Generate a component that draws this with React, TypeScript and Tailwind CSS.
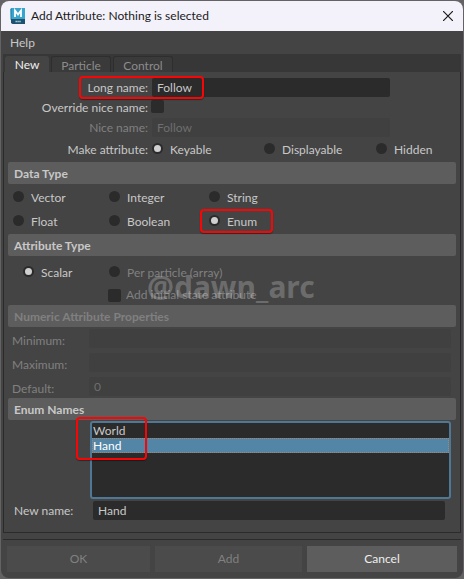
import { useState, type ReactNode } from "react";

const field =
  "block h-[19px] min-w-0 rounded-xs bg-[#2b2b2b] px-[5px] text-[12px] leading-[19px] text-[#c8c8c8] outline-none disabled:bg-[#404040] disabled:text-[#6e6e6e]";

const checkbox = "size-[13px] shrink-0 appearance-none rounded-xs bg-[#2b2b2b] checked:bg-[#c8c8c8]";

function Section({ title, disabled = false }: { title: string; disabled?: boolean }) {
  return (
    <h2
      className={`h-[22px] rounded-xs bg-[#5d5d5d] px-[6px] text-[12px] leading-[24px] font-bold ${
        disabled ? "text-[#808080]" : "text-[#c8c8c8]"
      }`}
    >
      {title}
    </h2>
  );
}

function Radio({
  group,
  label,
  checked = false,
  disabled = false,
}: {
  group: string;
  label: string;
  checked?: boolean;
  disabled?: boolean;
}) {
  return (
    <label className={`flex h-6 items-center gap-[7px] ${disabled ? "text-[#808080]" : ""}`}>
      <input
        type="radio"
        name={group}
        defaultChecked={checked}
        disabled={disabled}
        className="mb-[3px] size-[11px] shrink-0 appearance-none rounded-full border-2 border-[#2b2b2b] bg-[#2b2b2b] checked:bg-[#d0d0d0]"
      />
      <span className="whitespace-nowrap">{label}</span>
    </label>
  );
}

function NumberRow({ id, label, value = "" }: { id: string; label: string; value?: string }) {
  return (
    <div className="flex h-6 items-start pr-[5px] pl-1 text-[#808080]">
      <label htmlFor={id} className="w-[77px] pt-1">
        {label}
      </label>
      <input id={id} defaultValue={value} disabled className={`${field} flex-1`} />
    </div>
  );
}

function Highlight({ className }: { className: string }) {
  return (
    <div
      aria-hidden="true"
      className={`pointer-events-none absolute rounded-[4px] border-2 border-[#fa0505] shadow-[0_1px_1px_#00000066] ${className}`}
    />
  );
}

function Tab({ active = false, children }: { active?: boolean; children: ReactNode }) {
  return (
    <button
      type="button"
      role="tab"
      aria-selected={active}
      className={`h-4 rounded-t-[3px] leading-[18px] ${
        active
          ? "w-11 bg-[#444444] text-[#eeeeee]"
          : "w-[60px] border border-b-0 border-[#2e2e2e] bg-[#3a3a3a] text-[#8c8c8c]"
      }`}
    >
      {children}
    </button>
  );
}

function AppIcon() {
  return (
    <svg width="16" height="16" viewBox="0 0 16 16" aria-hidden="true">
      <path d="M1.5 0H15v12H1L.5 1z" fill="#39a5cc" />
      <path d="M.5 1 1.5 0v11L.5 12z" fill="#1b7fa6" />
      <path d="M1 11h14v5H2.5L1 15z" fill="#1c5470" />
      <path d="M5 9V2.5l3 4 3-4V9" fill="none" stroke="#fff" strokeWidth="1.8" />
      <path d="M5.5 13.5h1.4M7.4 13.5h1.4M9.3 13.5h1.4" stroke="#b8d0dc" strokeWidth="1.6" />
    </svg>
  );
}

export default function App() {
  const [names, setNames] = useState(["Hand"]);

  return (
    <div className="bg-[#656266] p-px font-[Lato,sans-serif] text-[12px] leading-4 text-[#c8c8c8]">
      <main className="relative overflow-hidden rounded-lg bg-[#444444]">
        <header className="flex h-[30px] items-center bg-[#f3f1f9] pr-[10px] pl-[9px] text-[#1b1b1b]">
          <AppIcon />
          <h1 className="ml-[5px] flex-1 text-[12px]">Add Attribute: Nothing is selected</h1>
          <button type="button" aria-label="Close">
            <svg width="10" height="10" viewBox="0 0 10 10" stroke="#1b1b1b" strokeWidth="1.2">
              <path d="M0 0l10 10M10 0L0 10" />
            </svg>
          </button>
        </header>

        <nav className="flex h-[23px] items-center px-[9px]">
          <button type="button">Help</button>
        </nav>

        <div className="mx-[2px]">
          <div role="tablist" className="flex h-[18px] items-end gap-[2px] bg-[#373737] px-[2px]">
            <Tab active>New</Tab>
            <Tab>Particle</Tab>
            <Tab>Control</Tab>
          </div>

          <div className="border border-t-0 border-[#2b2b2b] px-1 pt-[6px] pb-3">
            <div className="grid grid-cols-[140px_1fr] gap-x-1 pr-[66px]">
              <label htmlFor="long" className="pt-[2px] text-right">
                Long name:
              </label>
              <input id="long" defaultValue="Follow" className={field} />
            </div>
            <div className="mt-[3px] grid h-[17px] grid-cols-[140px_1fr] gap-x-[3px]">
              <label htmlFor="override" className="text-right">
                Override nice name:
              </label>
              <input id="override" type="checkbox" className={checkbox} />
            </div>
            <div className="mt-[1px] grid grid-cols-[140px_1fr] gap-x-1 pr-[66px]">
              <label htmlFor="nice" className="pt-[2px] text-right text-[#808080]">
                Nice name:
              </label>
              <input id="nice" defaultValue="Follow" disabled className={field} />
            </div>
            <div className="mt-[1px] grid h-6 grid-cols-[140px_108px_108px_1fr] gap-x-1">
              <span className="pt-1 text-right">Make attribute:</span>
              <Radio group="make" label="Keyable" checked />
              <Radio group="make" label="Displayable" />
              <Radio group="make" label="Hidden" />
            </div>

            <Section title="Data Type" />
            <div className="grid grid-cols-[96px_100px_1fr] pt-[2px] pl-[5px]">
              <Radio group="data" label="Vector" />
              <Radio group="data" label="Integer" />
              <Radio group="data" label="String" />
              <Radio group="data" label="Float" />
              <Radio group="data" label="Boolean" />
              <Radio group="data" label="Enum" checked />
            </div>

            <Section title="Attribute Type" />
            <div className="grid grid-cols-[86px_1fr] pt-[5px] pl-[15px]">
              <Radio group="type" label="Scalar" checked />
              <Radio group="type" label="Per particle (array)" disabled />
            </div>
            <label className="ml-[100px] flex h-5 items-center gap-[5px] text-[#808080]">
              <input type="checkbox" disabled className={checkbox} />
              Add initial state attribute
            </label>

            <Section title="Numeric Attribute Properties" disabled />
            <div className="-mb-[3px] pt-[2px]">
              <NumberRow id="minimum" label="Minimum:" />
              <NumberRow id="maximum" label="Maximum:" />
              <NumberRow id="default" label="Default:" value="0" />
            </div>

            <Section title="Enum Names" />
            <div className="mt-[1px] mr-[5px] ml-[82px]">
              <select
                multiple
                size={5}
                aria-label="Enum Names"
                value={names}
                onChange={(e) => setNames(Array.from(e.target.selectedOptions, (o) => o.value))}
                className="block h-[78px] w-full appearance-none overflow-hidden rounded-[3px] border-2 border-[#4f7896] bg-[#2b2b2b] p-0 text-[12px] text-[#c8c8c8] outline-none"
              >
                <option className="h-[15px] min-h-0 px-px py-0 leading-[15px]">World</option>
                <option className="h-[15px] min-h-0 px-px py-0 leading-[15px] outline-1 -outline-offset-1 outline-dotted outline-[#a88468] checked:bg-[linear-gradient(#5285a6,#5285a6)] checked:text-white">
                  Hand
                </option>
              </select>
            </div>
            <div className="mt-[2px] grid grid-cols-[79px_1fr] pr-[11px] pl-[6px]">
              <label htmlFor="newname" className="pt-[2px]">
                New name:
              </label>
              <input id="newname" defaultValue="Hand" className={field} />
            </div>
          </div>
        </div>

        <footer className="mx-[2px] mt-[6px] grid grid-cols-[143fr_147fr_150fr] gap-[5px] border-t border-[#2b2b2b] px-1 pt-[6px] pb-[6px]">
          <button type="button" disabled className="h-[26px] bg-[#4b4b4b] text-[#808080]">
            OK
          </button>
          <button type="button" disabled className="h-[26px] bg-[#4b4b4b] text-[#808080]">
            Add
          </button>
          <button type="button" className="h-[26px] bg-[#5d5d5d] text-[#eeeeee]">
            Cancel
          </button>
        </footer>

        <Highlight className="top-[75px] left-[78px] h-[23px] w-[125px]" />
        <Highlight className="top-[208px] left-[199px] h-[24px] w-[73px]" />
        <Highlight className="top-[416px] left-[75px] h-[43px] w-[71px]" />
        <p className="pointer-events-none absolute top-[264px] left-[146px] font-['Noto_Sans',sans-serif] text-[30px] leading-[44px] font-bold text-[#ffffff38]">
          @dawn_arc
        </p>
      </main>
    </div>
  );
}
